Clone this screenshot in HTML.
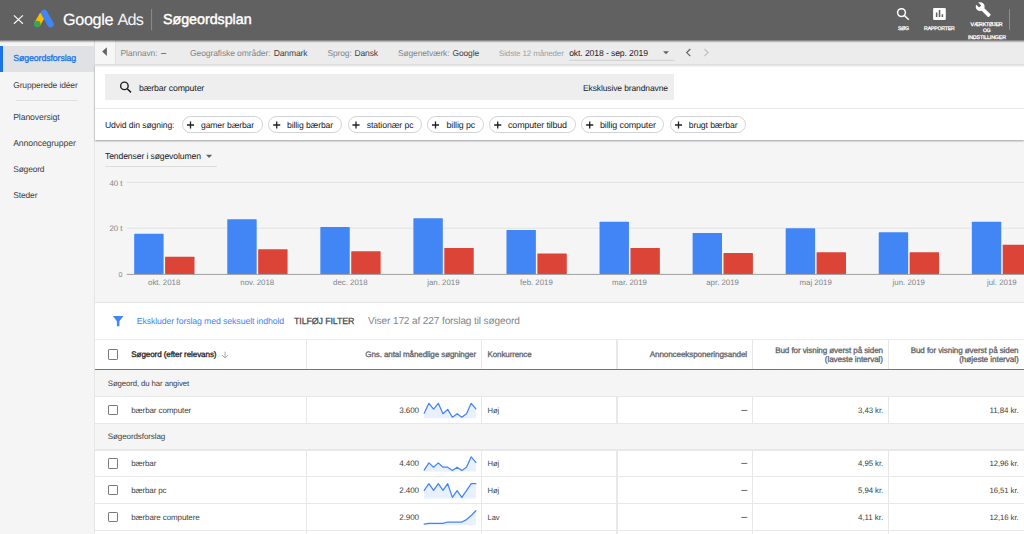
<!DOCTYPE html>
<html lang="da"><head><meta charset="utf-8"><title>Søgeordsplan – Google Ads</title>
<style>
*{box-sizing:border-box;margin:0;padding:0}
html,body{width:1024px;height:534px;overflow:hidden;background:#fff;font-family:"Liberation Sans",sans-serif}
.b{position:absolute}
.t{position:absolute;white-space:pre;line-height:16px;height:16px;text-rendering:geometricPrecision}
#hdr{left:0;top:0;width:1024px;height:39.6px;background:#616161;z-index:5}
#hsh{left:0;top:39.6px;width:1024px;height:3.4px;background:linear-gradient(rgba(0,0,0,.55),rgba(0,0,0,.3) 35%,rgba(0,0,0,.1) 70%,rgba(0,0,0,0));z-index:5}
#side{left:0;top:40px;width:94px;height:494px;background:#f5f5f5}
#sideb{left:93.8px;top:40px;width:1.3px;height:494px;background:#e6e6e6}
#active{left:0;top:45.7px;width:93.6px;height:26.2px;background:#dfe1e5;border-left:3px solid #1a73e8}
#sdiv{left:16px;top:100px;width:62px;height:1px;background:#e0e0e0}
#topbar{left:95px;top:40px;width:929px;height:24.4px;background:#ececec;box-shadow:0 0 1px rgba(0,0,0,.25);z-index:4}
#tbs{left:95px;top:64.4px;width:929px;height:2.4px;background:linear-gradient(#d9d9d9,#e9e9e9 60%,#f6f6f6);z-index:4}
#collapse{left:95px;top:40px;width:21.3px;height:24.3px;background:#f6f6f6;border-right:1px solid #e2e2e2;z-index:4}
#card{left:95px;top:64.3px;width:929px;height:75.5px;background:#fff;box-shadow:0 1px 2px rgba(0,0,0,.36);z-index:2}
#sbox{left:105px;top:74.2px;width:568.8px;height:25.9px;background:#eeeeee;z-index:3}
#cdiv{left:95px;top:107.5px;width:929px;height:1.1px;background:#e9e9e9;z-index:3}
.chip{position:absolute;top:116.4px;height:16.5px;border:1px solid #d0d2d5;border-radius:9px;background:#fff;z-index:3}
.t{z-index:6}
#chartbg{left:95px;top:140px;width:929px;height:162.6px;background:#f5f5f5}
#chartb{left:95px;top:302px;width:929px;height:1px;background:#e6e6e6}
#tbl{left:95px;top:303px;width:929px;height:231px;background:#fff}
.hl{position:absolute;left:95px;width:929px;height:1.2px;background:#e8e8e8}
.vl{position:absolute;width:1.2px;background:#e8e8e8}
.grp{position:absolute;left:95px;width:929px;background:#f5f5f5}
.cb{position:absolute;left:107.5px;width:10.5px;height:10.3px;border:1.5px solid #77797c;border-radius:1.1px;background:#fff}
svg{position:absolute;overflow:visible}
h1.t{font-weight:400}
a.t{text-decoration:none}

</style></head>
<body>
<nav>
<div class="b" id="side"></div>
<div class="b" id="active"></div>
<div class="b" id="sideb"></div>
<div class="b" id="sdiv"></div>
<a class="t" style="left:13.20px;top:50px;font-size:8.84px;color:#1a73e8;letter-spacing:-0.124px;-webkit-text-stroke:0.3px #1a73e8;">Søgeordsforslag</a>
<a class="t" style="left:13.20px;top:77px;font-size:8.48px;color:#3c4043;letter-spacing:-0.123px;">Grupperede idéer</a>
<a class="t" style="left:13.20px;top:109px;font-size:8.7px;color:#3c4043;letter-spacing:-0.115px;">Planoversigt</a>
<a class="t" style="left:13.20px;top:135px;font-size:8.71px;color:#3c4043;letter-spacing:-0.136px;">Annoncegrupper</a>
<a class="t" style="left:13.20px;top:161px;font-size:8.38px;color:#3c4043;letter-spacing:-0.134px;">Søgeord</a>
<a class="t" style="left:13.20px;top:187px;font-size:8.46px;color:#3c4043;letter-spacing:-0.121px;">Steder</a>
</nav>
<main>
<section id="trends">
<div class="b" id="chartbg"></div>
<div class="b" id="chartb"></div>
<svg style="left:0;top:0" width="1024" height="534" viewBox="0 0 1024 534">
<path d="M126.8 182.4H1024M126.8 228.2H1024" stroke="#e2e2e2" stroke-width="1" fill="none"/>
<rect x="134.20" y="233.8" width="29.4" height="40.40" fill="#4285f4" rx="0.6"/>
<rect x="165.10" y="256.7" width="29.4" height="17.50" fill="#db4437" rx="0.6"/>
<rect x="227.27" y="219.3" width="29.4" height="54.90" fill="#4285f4" rx="0.6"/>
<rect x="258.17" y="249.2" width="29.4" height="25.00" fill="#db4437" rx="0.6"/>
<rect x="320.34" y="227.1" width="29.4" height="47.10" fill="#4285f4" rx="0.6"/>
<rect x="351.24" y="251.2" width="29.4" height="23.00" fill="#db4437" rx="0.6"/>
<rect x="413.41" y="218.2" width="29.4" height="56.00" fill="#4285f4" rx="0.6"/>
<rect x="444.31" y="248" width="29.4" height="26.20" fill="#db4437" rx="0.6"/>
<rect x="506.48" y="229.9" width="29.4" height="44.30" fill="#4285f4" rx="0.6"/>
<rect x="537.38" y="253.4" width="29.4" height="20.80" fill="#db4437" rx="0.6"/>
<rect x="599.55" y="221.7" width="29.4" height="52.50" fill="#4285f4" rx="0.6"/>
<rect x="630.45" y="248" width="29.4" height="26.20" fill="#db4437" rx="0.6"/>
<rect x="692.62" y="233" width="29.4" height="41.20" fill="#4285f4" rx="0.6"/>
<rect x="723.52" y="253.1" width="29.4" height="21.10" fill="#db4437" rx="0.6"/>
<rect x="785.69" y="228.3" width="29.4" height="45.90" fill="#4285f4" rx="0.6"/>
<rect x="816.59" y="252.2" width="29.4" height="22.00" fill="#db4437" rx="0.6"/>
<rect x="878.76" y="232.3" width="29.4" height="41.90" fill="#4285f4" rx="0.6"/>
<rect x="909.66" y="252.2" width="29.4" height="22.00" fill="#db4437" rx="0.6"/>
<rect x="971.83" y="221.7" width="29.4" height="52.50" fill="#4285f4" rx="0.6"/>
<rect x="1002.73" y="244.7" width="29.4" height="29.50" fill="#db4437" rx="0.6"/>
<path d="M126.8 274.4H1024" stroke="#9e9e9e" stroke-width="1" fill="none"/>
<path d="M105.2 166.5H217" stroke="#dcdcdc" stroke-width="1" fill="none"/>
<path d="M206 154.8h6.2l-3.1 3.2z" fill="#5f6368"/>
</svg>
<span class="t" style="left:105.00px;top:148px;font-size:8.64px;color:#202124;letter-spacing:-0.128px;">Tendenser i søgevolumen</span>
<span class="t" style="left:109.50px;top:176px;font-size:7.97px;color:#80868b;letter-spacing:-0.098px;">40 t</span>
<span class="t" style="left:109.50px;top:221px;font-size:7.97px;color:#80868b;letter-spacing:-0.098px;">20 t</span>
<span class="t" style="left:118.60px;top:268px;font-size:7.04px;color:#80868b;letter-spacing:-0.116px;">0</span>
<span class="t" style="left:148.05px;top:275px;font-size:7.85px;color:#80868b;">okt. 2018</span>
<span class="t" style="left:240.32px;top:275px;font-size:7.85px;color:#80868b;">nov. 2018</span>
<span class="t" style="left:333.10px;top:275px;font-size:7.85px;color:#80868b;">dec. 2018</span>
<span class="t" style="left:427.26px;top:275px;font-size:7.85px;color:#80868b;">jan. 2019</span>
<span class="t" style="left:520.11px;top:275px;font-size:7.85px;color:#80868b;">feb. 2019</span>
<span class="t" style="left:612.09px;top:275px;font-size:7.85px;color:#80868b;">mar. 2019</span>
<span class="t" style="left:706.25px;top:275px;font-size:7.85px;color:#80868b;">apr. 2019</span>
<span class="t" style="left:799.54px;top:275px;font-size:7.85px;color:#80868b;">maj 2019</span>
<span class="t" style="left:892.61px;top:275px;font-size:7.85px;color:#80868b;">jun. 2019</span>
<span class="t" style="left:986.99px;top:275px;font-size:7.85px;color:#80868b;">jul. 2019</span>
</section>
<section id="ideas">
<div class="b" id="tbl"></div>
<div class="hl" style="top:338.8px;background:#ededed"></div>
<div class="grp" style="top:370px;height:26.4px"></div>
<div class="grp" style="top:423.3px;height:26.6px"></div>
<div class="hl" style="top:368.8px;background:#70757a;height:1.25px"></div>
<div class="hl" style="top:395.80px"></div>
<div class="hl" style="top:422.70px"></div>
<div class="hl" style="top:449.40px"></div>
<div class="hl" style="top:476.10px"></div>
<div class="hl" style="top:502.80px"></div>
<div class="hl" style="top:529.65px"></div>
<div class="vl" style="left:306.0px;top:339.4px;height:29.4px"></div>
<div class="vl" style="left:306.0px;top:397px;height:26.0px"></div>
<div class="vl" style="left:306.0px;top:450.6px;height:83.4px"></div>
<div class="vl" style="left:480.8px;top:339.4px;height:29.4px"></div>
<div class="vl" style="left:480.8px;top:397px;height:26.0px"></div>
<div class="vl" style="left:480.8px;top:450.6px;height:83.4px"></div>
<div class="vl" style="left:616.4px;top:339.4px;height:29.4px"></div>
<div class="vl" style="left:616.4px;top:397px;height:26.0px"></div>
<div class="vl" style="left:616.4px;top:450.6px;height:83.4px"></div>
<div class="vl" style="left:752.3px;top:339.4px;height:29.4px"></div>
<div class="vl" style="left:752.3px;top:397px;height:26.0px"></div>
<div class="vl" style="left:752.3px;top:450.6px;height:83.4px"></div>
<div class="vl" style="left:888.0px;top:339.4px;height:29.4px"></div>
<div class="vl" style="left:888.0px;top:397px;height:26.0px"></div>
<div class="vl" style="left:888.0px;top:450.6px;height:83.4px"></div>
<div class="cb" style="top:349.30px"></div>
<div class="cb" style="top:404.95px"></div>
<div class="cb" style="top:458.25px"></div>
<div class="cb" style="top:484.95px"></div>
<div class="cb" style="top:511.90px"></div>
<svg style="left:0;top:0" width="1024" height="534" viewBox="0 0 1024 534">
<polygon points="424.2,413.2 428.9,403.3 433.6,409.1 438.3,403.3 443.0,413.7 447.7,409.4 452.4,417.2 457.1,413.7 461.8,417.2 466.5,413.7 471.2,403.3 475.9,408.9 475.9,418.2 424.2,418.2" fill="#e8f0fe"/>
<polyline points="424.2,413.2 428.9,403.3 433.6,409.1 438.3,403.3 443.0,413.7 447.7,409.4 452.4,417.2 457.1,413.7 461.8,417.2 466.5,413.7 471.2,403.3 475.9,408.9" fill="none" stroke="#4285f4" stroke-width="1.25" stroke-linejoin="round" stroke-linecap="round"/>
<polygon points="424.2,470.2 428.9,462.9 433.6,467.2 438.3,462.9 443.0,467.2 447.7,467.2 452.4,470.6 457.1,467.2 461.8,470.6 466.5,467.2 471.2,456.8 475.9,462.4 475.9,471.5 424.2,471.5" fill="#e8f0fe"/>
<polyline points="424.2,470.2 428.9,462.9 433.6,467.2 438.3,462.9 443.0,467.2 447.7,467.2 452.4,470.6 457.1,467.2 461.8,470.6 466.5,467.2 471.2,456.8 475.9,462.4" fill="none" stroke="#4285f4" stroke-width="1.25" stroke-linejoin="round" stroke-linecap="round"/>
<polygon points="424.2,490.4 428.9,483.7 433.6,490.4 438.3,483.7 443.0,490.4 447.7,483.7 452.4,497.4 457.1,490.7 461.8,497.4 466.5,490.6 471.2,483.7 475.9,483.7 475.9,498.5 424.2,498.5" fill="#e8f0fe"/>
<polyline points="424.2,490.4 428.9,483.7 433.6,490.4 438.3,483.7 443.0,490.4 447.7,483.7 452.4,497.4 457.1,490.7 461.8,497.4 466.5,490.6 471.2,483.7 475.9,483.7" fill="none" stroke="#4285f4" stroke-width="1.25" stroke-linejoin="round" stroke-linecap="round"/>
<polygon points="424.2,524.2 428.9,523.4 433.6,523.4 438.3,523.4 443.0,523.4 447.7,522.0 452.4,522.0 457.1,522.0 461.8,522.0 466.5,519.6 471.2,515.6 475.9,510.7 475.9,525.2 424.2,525.2" fill="#e8f0fe"/>
<polyline points="424.2,524.2 428.9,523.4 433.6,523.4 438.3,523.4 443.0,523.4 447.7,522.0 452.4,522.0 457.1,522.0 461.8,522.0 466.5,519.6 471.2,515.6 475.9,510.7" fill="none" stroke="#4285f4" stroke-width="1.25" stroke-linejoin="round" stroke-linecap="round"/>
</svg>
<svg style="left:0;top:0;z-index:7" width="1024" height="534" viewBox="0 0 1024 534">
<path d="M112.85 315.9h10.55l-4 5.4v4.9h-2.5v-4.9z" fill="#4285f4"/>
<path d="M225.1 351.7v6M222.1 355.1l3 2.9 3-2.9" stroke="#9aa0a6" stroke-width="0.9" fill="none"/>
</svg>
<a class="t" style="left:136.70px;top:313px;font-size:8.75px;color:#4285f4;letter-spacing:-0.117px;">Ekskluder forslag med seksuelt indhold</a>
<span class="t" style="left:294.00px;top:313px;font-size:8.91px;color:#45484c;letter-spacing:-0.139px;-webkit-text-stroke:0.25px #45484c;">TILFØJ FILTER</span>
<span class="t" style="left:368.10px;top:314px;font-size:10.08px;color:#80868b;letter-spacing:-0.126px;">Viser 172 af 227 forslag til søgeord</span>
<span class="t" style="left:131.30px;top:347px;font-size:8.1px;color:#202124;letter-spacing:-0.108px;-webkit-text-stroke:0.3px #202124;">Søgeord (efter relevans)</span>
<span class="t" style="left:365.30px;top:347px;font-size:8.06px;color:#5f6368;letter-spacing:-0.112px;-webkit-text-stroke:0.3px #5f6368;">Gns. antal månedlige søgninger</span>
<span class="t" style="left:487.60px;top:347px;font-size:7.99px;color:#5f6368;letter-spacing:-0.118px;-webkit-text-stroke:0.3px #5f6368;">Konkurrence</span>
<span class="t" style="left:649.70px;top:347px;font-size:8.13px;color:#5f6368;letter-spacing:-0.123px;-webkit-text-stroke:0.3px #5f6368;">Annonceeksponeringsandel</span>
<span class="t" style="left:775.20px;top:343px;font-size:8.1px;color:#5f6368;letter-spacing:-0.107px;-webkit-text-stroke:0.3px #5f6368;">Bud for visning øverst på siden</span>
<span class="t" style="left:824.80px;top:352px;font-size:8.19px;color:#5f6368;letter-spacing:-0.099px;-webkit-text-stroke:0.3px #5f6368;">(laveste interval)</span>
<span class="t" style="left:910.70px;top:343px;font-size:8.1px;color:#5f6368;letter-spacing:-0.107px;-webkit-text-stroke:0.3px #5f6368;">Bud for visning øverst på siden</span>
<span class="t" style="left:959.20px;top:352px;font-size:8.22px;color:#5f6368;letter-spacing:-0.101px;-webkit-text-stroke:0.3px #5f6368;">(højeste interval)</span>
<span class="t" style="left:107.80px;top:376px;font-size:7.81px;color:#3c4043;letter-spacing:-0.104px;">Søgeord, du har angivet</span>
<span class="t" style="left:107.80px;top:429px;font-size:8.06px;color:#3c4043;letter-spacing:-0.116px;">Søgeordsforslag</span>
<span class="t" style="left:131.20px;top:403px;font-size:8.06px;color:#3c4043;letter-spacing:-0.121px;">bærbar computer</span>
<span class="t" style="left:399.30px;top:403px;font-size:8.07px;color:#3c4043;letter-spacing:-0.119px;">3.600</span>
<span class="t" style="left:487.60px;top:403px;font-size:7.62px;color:#3c4043;letter-spacing:-0.117px;">Høj</span>
<span class="t" style="left:741.20px;top:402px;font-size:10.74px;color:#3c4043;letter-spacing:-0.174px;">–</span>
<span class="t" style="left:858.10px;top:403px;font-size:7.85px;color:#3c4043;letter-spacing:-0.093px;">3,43 kr.</span>
<span class="t" style="left:989.50px;top:403px;font-size:7.97px;color:#3c4043;letter-spacing:-0.098px;">11,84 kr.</span>
<span class="t" style="left:131.20px;top:456px;font-size:7.99px;color:#3c4043;letter-spacing:-0.126px;">bærbar</span>
<span class="t" style="left:399.30px;top:456px;font-size:8.07px;color:#3c4043;letter-spacing:-0.119px;">4.400</span>
<span class="t" style="left:487.60px;top:456px;font-size:7.62px;color:#3c4043;letter-spacing:-0.117px;">Høj</span>
<span class="t" style="left:741.20px;top:455px;font-size:10.74px;color:#3c4043;letter-spacing:-0.174px;">–</span>
<span class="t" style="left:858.10px;top:456px;font-size:7.85px;color:#3c4043;letter-spacing:-0.093px;">4,95 kr.</span>
<span class="t" style="left:989.50px;top:456px;font-size:7.81px;color:#3c4043;letter-spacing:-0.095px;">12,96 kr.</span>
<span class="t" style="left:131.20px;top:483px;font-size:7.98px;color:#3c4043;letter-spacing:-0.119px;">bærbar pc</span>
<span class="t" style="left:399.30px;top:483px;font-size:8.07px;color:#3c4043;letter-spacing:-0.119px;">2.400</span>
<span class="t" style="left:487.60px;top:483px;font-size:7.62px;color:#3c4043;letter-spacing:-0.117px;">Høj</span>
<span class="t" style="left:741.20px;top:482px;font-size:10.74px;color:#3c4043;letter-spacing:-0.174px;">–</span>
<span class="t" style="left:858.10px;top:483px;font-size:7.85px;color:#3c4043;letter-spacing:-0.093px;">5,94 kr.</span>
<span class="t" style="left:989.50px;top:483px;font-size:7.81px;color:#3c4043;letter-spacing:-0.095px;">16,51 kr.</span>
<span class="t" style="left:131.20px;top:510px;font-size:8.03px;color:#3c4043;letter-spacing:-0.119px;">bærbare computere</span>
<span class="t" style="left:399.30px;top:510px;font-size:8.07px;color:#3c4043;letter-spacing:-0.119px;">2.900</span>
<span class="t" style="left:487.60px;top:510px;font-size:7.54px;color:#3c4043;letter-spacing:-0.119px;">Lav</span>
<span class="t" style="left:741.20px;top:509px;font-size:10.74px;color:#3c4043;letter-spacing:-0.174px;">–</span>
<span class="t" style="left:858.10px;top:510px;font-size:8.03px;color:#3c4043;letter-spacing:-0.093px;">4,11 kr.</span>
<span class="t" style="left:989.50px;top:510px;font-size:7.81px;color:#3c4043;letter-spacing:-0.095px;">12,16 kr.</span>
</section>
<section id="search">
<div class="b" id="card"></div>
<div class="b" id="sbox"></div>
<div class="b" id="cdiv"></div>
<div class="chip" style="left:182px;width:81.00px"></div>
<div class="chip" style="left:268.2px;width:74.00px"></div>
<div class="chip" style="left:347.5px;width:74.50px"></div>
<div class="chip" style="left:427px;width:57.00px"></div>
<div class="chip" style="left:489.2px;width:86.50px"></div>
<div class="chip" style="left:581.2px;width:83.30px"></div>
<div class="chip" style="left:670px;width:76.20px"></div>
<svg style="left:0;top:0;z-index:7" width="1024" height="534" viewBox="0 0 1024 534">
<circle cx="124.4" cy="85.9" r="3.75" stroke="#202124" stroke-width="1.4" fill="none"/>
<path d="M127.2 88.7l3.8 3.7" stroke="#202124" stroke-width="1.5" fill="none"/>
<path d="M190.50 121.45v7.1M186.95 125h7.1M276.70 121.45v7.1M273.15 125h7.1M356.00 121.45v7.1M352.45 125h7.1M435.50 121.45v7.1M431.95 125h7.1M497.70 121.45v7.1M494.15 125h7.1M589.70 121.45v7.1M586.15 125h7.1M678.50 121.45v7.1M674.95 125h7.1" stroke="#202124" stroke-width="1.3" fill="none"/>
</svg>
<span class="t" style="left:138.90px;top:80px;font-size:8.77px;color:#202124;letter-spacing:-0.131px;">bærbar computer</span>
<span class="t" style="left:583.00px;top:80px;font-size:8.51px;color:#202124;letter-spacing:-0.120px;">Eksklusive brandnavne</span>
<span class="t" style="left:105.00px;top:117px;font-size:8.63px;color:#202124;letter-spacing:-0.115px;">Udvid din søgning:</span>
<span class="t" style="left:201.00px;top:117px;font-size:8.62px;color:#202124;letter-spacing:-0.135px;">gamer bærbar</span>
<span class="t" style="left:287.00px;top:117px;font-size:8.65px;color:#202124;letter-spacing:-0.107px;">billig bærbar</span>
<span class="t" style="left:366.70px;top:117px;font-size:8.76px;color:#202124;letter-spacing:-0.117px;">stationær pc</span>
<span class="t" style="left:446.50px;top:117px;font-size:8.86px;color:#202124;letter-spacing:-0.094px;">billig pc</span>
<span class="t" style="left:508.00px;top:117px;font-size:8.89px;color:#202124;letter-spacing:-0.119px;">computer tilbud</span>
<span class="t" style="left:600.00px;top:117px;font-size:8.95px;color:#202124;letter-spacing:-0.114px;">billig computer</span>
<span class="t" style="left:688.70px;top:117px;font-size:8.7px;color:#202124;letter-spacing:-0.124px;">brugt bærbar</span>
</section>
<section id="toolbar">
<div class="b" id="topbar"></div>
<div class="b" id="collapse"></div>
<div class="b" id="tbs"></div>
<svg style="left:0;top:0;z-index:7" width="1024" height="534" viewBox="0 0 1024 534">
<path d="M106.9 47.3v8.6l-4.7-4.3z" fill="#5f6368"/>
<path d="M569.2 60.3H674.5" stroke="#d0d0d0" stroke-width="1" fill="none"/>
<path d="M663 51.2h6l-3 3z" fill="#5f6368"/>
<path d="M690.3 49l-3.6 3.6 3.6 3.6" stroke="#5f6368" stroke-width="1.2" fill="none"/>
<path d="M704.4 49l3.6 3.6-3.6 3.6" stroke="#bdc1c6" stroke-width="1.2" fill="none"/>
</svg>
<span class="t" style="left:120.50px;top:45px;font-size:8.57px;color:#80868b;letter-spacing:-0.124px;">Plannavn:</span>
<span class="t" style="left:161.00px;top:45px;font-size:9.26px;color:#3c4043;letter-spacing:-0.151px;">–</span>
<span class="t" style="left:190.00px;top:45px;font-size:8.57px;color:#80868b;letter-spacing:-0.119px;">Geografiske områder:</span>
<span class="t" style="left:273.70px;top:45px;font-size:8.58px;color:#3c4043;letter-spacing:-0.144px;">Danmark</span>
<span class="t" style="left:327.50px;top:45px;font-size:8.46px;color:#80868b;letter-spacing:-0.121px;">Sprog:</span>
<span class="t" style="left:354.50px;top:45px;font-size:8.54px;color:#3c4043;letter-spacing:-0.141px;">Dansk</span>
<span class="t" style="left:398.00px;top:45px;font-size:8.45px;color:#80868b;letter-spacing:-0.131px;">Søgenetværk:</span>
<span class="t" style="left:452.50px;top:45px;font-size:8.46px;color:#3c4043;letter-spacing:-0.130px;">Google</span>
<span class="t" style="left:499.00px;top:46px;font-size:7.94px;color:#9aa0a6;letter-spacing:-0.115px;">Sidste 12 måneder</span>
<span class="t" style="left:569.20px;top:45px;font-size:8.64px;color:#202124;letter-spacing:-0.113px;">okt. 2018 - sep. 2019</span>
</section>
</main>
<header>
<div class="b" id="hdr"></div>
<div class="b" id="hsh"></div>
<svg style="left:0;top:0;z-index:7" width="1024" height="534" viewBox="0 0 1024 534">
<!-- close -->
<path d="M13.9 15.4l9 8.4M22.9 15.4l-9 8.4" stroke="#fafafa" stroke-width="1.2" fill="none"/>
<!-- Google Ads logo -->
<path d="M42.85 14.35L37.25 24.05" stroke="#fbbc04" stroke-width="6.4" fill="none"/>
<path d="M44.15 12.85L50.5 24.05" stroke="#4285f4" stroke-width="6.5" stroke-linecap="round" fill="none"/>
<circle cx="37.25" cy="24.05" r="3.25" fill="#34a853"/>
<!-- dividers -->
<path d="M151.6 9v21.5" stroke="#8d8d8d" stroke-width="1" fill="none"/>
<path d="M1009.5 9v21" stroke="#8d8d8d" stroke-width="1" fill="none"/>
<!-- search -->
<circle cx="901.5" cy="12.6" r="3.9" stroke="#fff" stroke-width="1.5" fill="none"/>
<path d="M904.4 15.5l4.4 4.3" stroke="#fff" stroke-width="1.6" fill="none"/>
<!-- reports -->
<rect x="933.1" y="7.9" width="12.7" height="12" rx="1.2" fill="#fff"/>
<path d="M936.65 12.4v4.5M939.55 10.1v6.8M942.4 14.2v2.7" stroke="#616161" stroke-width="1.55" fill="none"/>
<!-- tools -->
<g transform="translate(975.1 1.45) scale(0.68)"><path fill="#fff" d="M22.7 19l-9.1-9.1c.9-2.3.4-5-1.5-6.9-2-2-5-2.4-7.4-1.3L9 6 6 9 1.6 4.7C.4 7.1.9 10.1 2.9 12.1c1.9 1.9 4.6 2.4 6.9 1.5l9.1 9.1c.4.4 1 .4 1.4 0l2.3-2.3c.5-.4.5-1.1.1-1.4z"/></g>
</svg>
<span class="t" style="left:63.00px;top:12px;font-size:16.2px;color:#fff;letter-spacing:-0.357px;-webkit-text-stroke:0.2px #fff;">Google</span>
<span class="t" style="left:117.40px;top:12px;font-size:16.2px;color:#f1f3f4;letter-spacing:-0.706px;">Ads</span>
<h1 class="t" style="left:163.00px;top:12px;font-size:14.3px;color:#fff;letter-spacing:-0.036px;-webkit-text-stroke:0.45px #fff;">Søgeordsplan</h1>
<span class="t" style="left:897.90px;top:21px;font-size:5.15px;color:#fff;letter-spacing:-0.182px;-webkit-text-stroke:0.28px #fff;">SØG</span>
<span class="t" style="left:924.10px;top:21px;font-size:5.16px;color:#fff;letter-spacing:-0.169px;-webkit-text-stroke:0.28px #fff;">RAPPORTER</span>
<span class="t" style="left:970.60px;top:17px;font-size:5.27px;color:#fff;letter-spacing:-0.176px;-webkit-text-stroke:0.28px #fff;">VÆRKTØJER</span>
<span class="t" style="left:983.10px;top:23px;font-size:5.06px;color:#fff;letter-spacing:-0.186px;-webkit-text-stroke:0.28px #fff;">OG</span>
<span class="t" style="left:967.90px;top:30px;font-size:5.28px;color:#fff;letter-spacing:-0.146px;-webkit-text-stroke:0.28px #fff;">INDSTILLINGER</span>
</header>
</body></html>
